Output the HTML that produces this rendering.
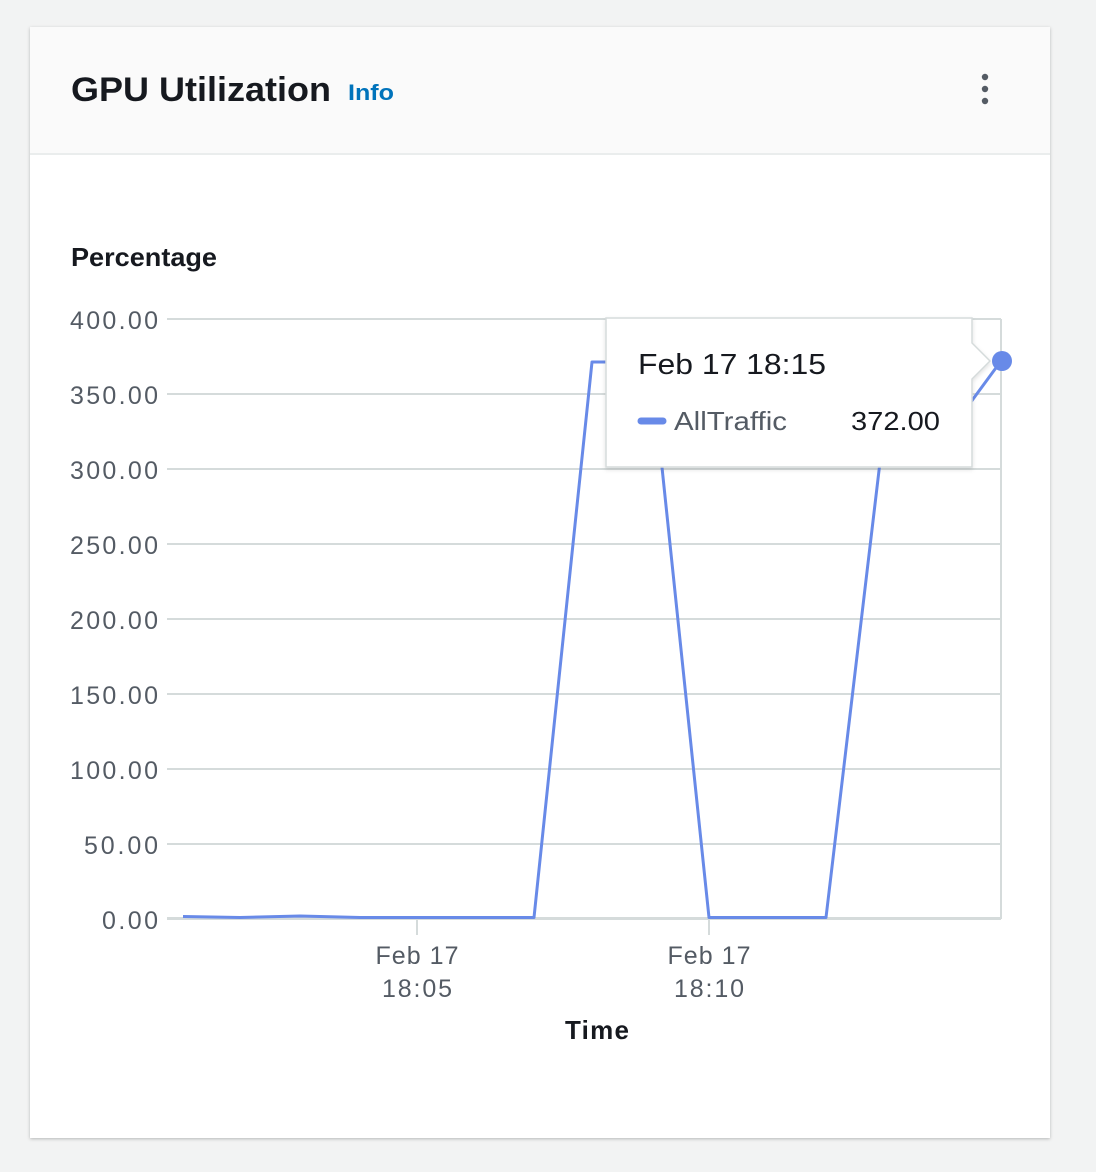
<!DOCTYPE html>
<html><head><meta charset="utf-8"><style>
html,body{margin:0;padding:0;background:#f2f3f3;}
svg{display:block;font-family:"Liberation Sans",sans-serif;}
</style></head><body>
<svg width="1096" height="1172" viewBox="0 0 1096 1172" xmlns="http://www.w3.org/2000/svg">
<defs>
<filter id="sh" x="-5%" y="-5%" width="110%" height="115%"><feDropShadow dx="0" dy="1" stdDeviation="1.5" flood-color="#000" flood-opacity="0.25"/></filter>
<filter id="tsh" x="-10%" y="-10%" width="120%" height="130%"><feDropShadow dx="0" dy="2" stdDeviation="2" flood-color="#000" flood-opacity="0.12"/></filter>
</defs>
<rect width="1096" height="1172" fill="#f2f3f3"/>
<rect x="30" y="27" width="1020" height="1111" fill="#fff" filter="url(#sh)"/>
<rect x="30" y="27" width="1020" height="127" fill="#fafafa"/>
<rect x="30" y="153" width="1020" height="2" fill="#eaeded"/>
<text x="71" y="101" font-size="34" font-weight="bold" fill="#16191f" textLength="260" lengthAdjust="spacingAndGlyphs">GPU Utilization</text>
<text x="348" y="100" font-size="22" font-weight="bold" fill="#0073bb" textLength="46" lengthAdjust="spacingAndGlyphs">Info</text>
<circle cx="985" cy="77" r="3.2" fill="#545b64"/><circle cx="985" cy="89" r="3.2" fill="#545b64"/><circle cx="985" cy="101" r="3.2" fill="#545b64"/>
<text x="71" y="266" font-size="26" font-weight="bold" fill="#16191f" textLength="146" lengthAdjust="spacingAndGlyphs">Percentage</text>
<g stroke="#d5dbdb" stroke-width="2">
<line x1="167" y1="319" x2="1001" y2="319"/><line x1="167" y1="394" x2="1001" y2="394"/>
<line x1="167" y1="469" x2="1001" y2="469"/><line x1="167" y1="544" x2="1001" y2="544"/>
<line x1="167" y1="619" x2="1001" y2="619"/><line x1="167" y1="694" x2="1001" y2="694"/>
<line x1="167" y1="769" x2="1001" y2="769"/><line x1="167" y1="844" x2="1001" y2="844"/>
<line x1="1001" y1="319" x2="1001" y2="919"/>
<line x1="417" y1="920" x2="417" y2="935"/><line x1="709" y1="920" x2="709" y2="935"/>
</g>
<line x1="167" y1="918.5" x2="1001" y2="918.5" stroke="#d5dbdb" stroke-width="3"/>
<g font-size="25" fill="#545b64" text-anchor="end" lengthAdjust="spacingAndGlyphs">
<text x="158" y="329" textLength="88">400.00</text><text x="158" y="404" textLength="88">350.00</text><text x="158" y="479" textLength="88">300.00</text>
<text x="158" y="554" textLength="88">250.00</text><text x="158" y="629" textLength="88">200.00</text><text x="158" y="704" textLength="88">150.00</text>
<text x="158" y="779" textLength="88">100.00</text><text x="158" y="854" textLength="74">50.00</text><text x="158" y="929" textLength="56">0.00</text>
</g>
<g font-size="25" fill="#545b64" text-anchor="middle">
<text x="417" y="964" textLength="83">Feb 17</text><text x="417" y="997" textLength="70">18:05</text>
<text x="709" y="964" textLength="83">Feb 17</text><text x="709" y="997" textLength="70">18:10</text>
</g>
<text x="597" y="1039" font-size="26" font-weight="bold" fill="#16191f" text-anchor="middle" textLength="64">Time</text>
<polyline fill="none" stroke="#688ae8" stroke-width="3" stroke-linejoin="round" points="183,916.5 240,917.5 300,916 360,917.5 534,917.5 592,362 651,362 709,917.5 826,917.5 885,420 943,440 1001,361"/>
<circle cx="1002" cy="361" r="10" fill="#688ae8"/>
<g filter="url(#tsh)">
<path d="M606,318 H972 V343 L990,361 L972,379 V467 H606 Z" fill="#fff" stroke="#d5dbdb" stroke-width="1.5"/>
</g>
<text x="638" y="374" font-size="29" fill="#16191f" textLength="188" lengthAdjust="spacingAndGlyphs">Feb 17 18:15</text>
<line x1="641" y1="421" x2="663" y2="421" stroke="#688ae8" stroke-width="7" stroke-linecap="round"/>
<text x="674" y="430" font-size="26" fill="#545b64" textLength="113" lengthAdjust="spacingAndGlyphs">AllTraffic</text>
<text x="940" y="430" font-size="26" fill="#16191f" text-anchor="end" textLength="89" lengthAdjust="spacingAndGlyphs">372.00</text>
</svg>
</body></html>
